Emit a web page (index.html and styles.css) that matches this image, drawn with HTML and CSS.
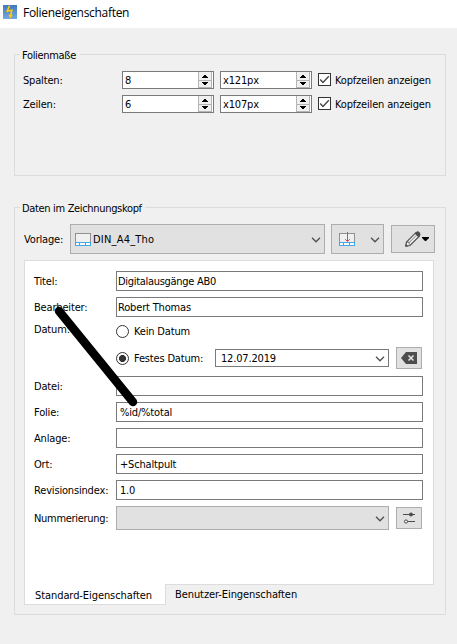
FILE: index.html
```html
<!DOCTYPE html>
<html lang="de">
<head>
<meta charset="utf-8">
<title>Folieneigenschaften</title>
<link rel="stylesheet" href="styles.css">
</head>
<body>
<svg class="defs" width="0" height="0">
  <symbol id="chevron" viewBox="0 0 10 6"><path d="M1 .8 5 4.8 9 .8" fill="none" stroke="#505050" stroke-width="1.3"/></symbol>
  <symbol id="arrows" viewBox="0 0 14 16" shape-rendering="crispEdges">
    <path d="M0 0h14v16H0z" fill="#f0f0f0"/>
    <path d="M.5 0v15.5H14M.5 8.5H14M13.5 0v16" fill="none" stroke="#b4b4b4"/>
    <path d="M6 3h2v1h1v1H5V4h1zM4 5h6v1H4zM4 10h6v1H4zM5 11h4v1H8v1H6v-1H5z" fill="#000"/>
  </symbol>
  <symbol id="check" viewBox="0 0 13 13"><path d="M2.2 6.5 5 9.5 10.8 3.3" fill="none" stroke="#404040" stroke-width="1.3"/></symbol>
</svg>
<header class="titlebar">
  <svg class="logo" width="14" height="14" viewBox="0 0 14 14">
    <defs><linearGradient id="blue" x1="0" y1="0" x2="0" y2="1"><stop stop-color="#3f78bd"/><stop offset="1" stop-color="#74a9e2"/></linearGradient></defs>
    <path d="M0 0h14v14H0z" fill="url(#blue)"/>
    <path d="M6.5.8 4.2 6.2l4.6-.9L7.6 11" fill="none" stroke="#fc0" stroke-width="1.6"/>
    <path d="M5.4 9.5 7.2 13.4 9.7 10z" fill="#fc0"/>
  </svg>
  <span class="title">Folieneigenschaften</span>
</header>
<main>
  <section class="group sheet">
    <h2 class="legend">Folienmaße</h2>
    <div class="dims">
      <label>Spalten:</label>
      <div class="spin"><span>8</span><svg width="14" height="16"><use href="#arrows"/></svg></div>
      <div class="spin"><span>x121px</span><svg width="14" height="16"><use href="#arrows"/></svg></div>
      <div class="checkrow"><i class="box"><svg width="11" height="11" viewBox="1 1 11 11"><use href="#check" width="13" height="13"/></svg></i><span>Kopfzeilen anzeigen</span></div>
      <label>Zeilen:</label>
      <div class="spin"><span>6</span><svg width="14" height="16"><use href="#arrows"/></svg></div>
      <div class="spin"><span>x107px</span><svg width="14" height="16"><use href="#arrows"/></svg></div>
      <div class="checkrow"><i class="box"><svg width="11" height="11" viewBox="1 1 11 11"><use href="#check" width="13" height="13"/></svg></i><span>Kopfzeilen anzeigen</span></div>
    </div>
  </section>
  <section class="group block">
    <h2 class="legend wide">Daten im Zeichnungskopf</h2>
    <div class="template">
      <label class="tpl-label">Vorlage:</label>
      <div class="combo tpl">
        <svg width="16" height="13" viewBox="0 0 16 13" shape-rendering="crispEdges"><path d="M.5 9V.5h15V9" fill="#f0f0f0" stroke="#909090"/><path d="M.5 9.5h15v3H.5zM4.5 10v2M10.5 10v2" fill="#fff" stroke="#41a8e8"/></svg>
        <span class="tpl-name">DIN_A4_Tho</span>
        <svg class="chev" width="10" height="6"><use href="#chevron"/></svg>
      </div>
      <div class="combo place">
        <svg width="16" height="14" viewBox="0 0 16 14"><g shape-rendering="crispEdges"><path d="M.5 10V1.5h15V10" fill="#f0f0f0" stroke="#909090"/><path d="M.5 10.5h15v3H.5zM4.5 11v2M10.5 11v2" fill="#fff" stroke="#41a8e8"/><path d="M8.5 0v9" stroke="#da4453"/></g><path d="M6.2 7.2 8.5 9.5l2.3-2.3" fill="none" stroke="#da4453"/></svg>
        <svg class="chev" width="10" height="6"><use href="#chevron"/></svg>
      </div>
      <div class="combo edit">
        <svg width="16" height="16" viewBox="0 0 16 16"><path d="M.8 15.2 1.5 11 10.8 1.7 14.3 5.2 5 14.5z" fill="#eee" stroke="#4d4d4d" stroke-width="1.1"/><path d="m9.8 2.7 2-2.2q1.5-.5 2.7.7t.9 3L13.3 6.2zM.5 12.5v3h3z" fill="#4d4d4d"/><path d="M1.8 11.2h2.4v2.4M4.2 11.5l7-7" fill="none" stroke="#4d4d4d" stroke-width=".7"/></svg>
        <svg class="drop" width="7" height="4" viewBox="0 0 7 4"><path d="M0 0h7v1L4 4H3L0 1z"/></svg>
      </div>
    </div>
    <div class="panel">
      <label>Titel:</label><div class="field tight">Digitalausgänge AB0</div>
      <label>Bearbeiter:</label><div class="field">Robert Thomas</div>
      <label class="date-label">Datum:</label><div class="radio"><i></i><span>Kein Datum</span></div>
      <span></span>
      <div class="daterow">
        <div class="radio on"><i></i><span>Festes Datum:</span></div>
        <div class="date"><span>12.07.2019</span><svg class="chev" width="10" height="6"><use href="#chevron"/></svg></div>
        <div class="small"><svg width="16" height="12" viewBox="0 0 16 12"><path d="M0 6 5 0h11v12H5z" fill="#4d4d4d"/><path d="m7.5 3.5 5 5m0-5-5 5" stroke="#e1e1e1" stroke-width="1.6"/></svg></div>
      </div>
      <label>Datei:</label><div class="field"></div>
      <label>Folie:</label><div class="field pad">%id/%total</div>
      <label>Anlage:</label><div class="field"></div>
      <label>Ort:</label><div class="field pad">+Schaltpult</div>
      <label>Revisionsindex:</label><div class="field pad">1.0</div>
      <label class="tight">Nummerierung:</label>
      <div class="daterow">
        <div class="combo num"><svg class="chev" width="10" height="6"><use href="#chevron"/></svg></div>
        <div class="small"><svg width="12" height="12" viewBox="0 0 12 12"><path d="M0 2.5h12M4 9.5h8" stroke="#4d4d4d"/><circle cx="8" cy="2.5" r="2" fill="#4d4d4d"/><circle cx="3" cy="9.5" r="1.6" fill="#eee" stroke="#4d4d4d"/></svg></div>
      </div>
    </div>
    <nav class="tabs"><span class="tab active">Standard-Eigenschaften</span><span class="tab">Benutzer-Eingenschaften</span></nav>
  </section>
</main>
<svg class="stroke" width="457" height="644"><path d="M59 311 133 402"/></svg>
</body>
</html>
```

FILE: styles.css
```css
* { box-sizing: border-box; }
body { margin: 0; width: 457px; height: 644px; overflow: hidden; background: #f0f0f0; color: #000; font: 11px/14px "DejaVu Sans Condensed", "DejaVu Sans", sans-serif; font-stretch: condensed; letter-spacing: -.17px; white-space: nowrap; }
svg { display: block; flex: none; }
label, span { padding-top: 2px; }
.tight { letter-spacing: -.3px; }
.defs { position: absolute; }
.titlebar { height: 28px; background: #fff; display: flex; align-items: flex-start; padding: 5px 3px; gap: 6px; }
.title { padding-top: 0; font: 12px/16px "Open Sans", sans-serif; letter-spacing: -.3px; }
main { padding: 26px 11px 0 14px; display: flex; flex-direction: column; gap: 31px; }
.group { border: 1px solid #dcdcdc; }
.sheet { height: 122px; }
.block { height: 408px; }
.legend { margin: -8px 0 0 5px; padding: 0 2px; width: 60px; height: 16px; font: inherit; line-height: 18px; letter-spacing: -.33px; background: #f0f0f0; }
.legend.wide { width: 125px; }
.dims { display: grid; grid-template-columns: 93px 92px 92px 1fr; grid-auto-rows: 18px; column-gap: 6px; row-gap: 6px; margin: 8px 0 0 8px; align-items: center; }
.spin { height: 18px; border: 1px solid #7a7a7a; background: #fff; display: flex; align-items: center; justify-content: space-between; padding: 0 1px 0 2px; }
.checkrow { display: flex; align-items: center; gap: 4px; height: 16px; margin-bottom: 2px; }
.checkrow span { padding-top: 3px; }
.box { width: 13px; height: 13px; border: 1px solid #333; background: #fff; }
.template { display: flex; align-items: center; height: 30px; margin: 8px 0 0 9px; }
.tpl-label { width: 46px; }
.tpl-name { letter-spacing: .2px; }
.combo { background: #e1e1e1; border: 1px solid #adadad; display: flex; align-items: center; }
.chev { margin: 2px 0 0 auto; }
.tpl { width: 255px; height: 30px; padding: 0 3px 0 4px; gap: 2px; }
.place { width: 53px; height: 30px; padding: 0 3px 0 7px; margin: 0 7px 0 6px; }
.edit { width: 44px; height: 28px; padding-left: 13px; gap: 1px; }
.panel { margin: 6px 0 0 9px; width: 410px; height: 325px; padding: 10px 10px 0 9px; background: #fff; border: 1px solid #dcdcdc; display: grid; grid-template-columns: 82px 307px; grid-template-rows: 20px 20px 17px 24px repeat(5, 20px) 24px; row-gap: 6px; align-content: start; align-items: center; }
.date-label { align-self: start; padding: 0; }
.field { height: 20px; border: 1px solid #7a7a7a; padding: 3px 1px 1px; line-height: 14px; }
.pad { padding-left: 3px; }
.radio { display: flex; align-items: center; gap: 5px; }
.radio span { padding-top: 1px; }
.radio i { width: 13px; height: 13px; border: 1px solid #333; border-radius: 50%; background: #fff; }
.radio.on i { background: radial-gradient(circle, #333 3.2px, #fff 3.8px); }
.daterow { display: flex; align-items: center; }
.date { width: 174px; height: 18px; margin-left: auto; border: 1px solid #7a7a7a; display: flex; align-items: center; padding: 0 3px 0 5px; }
.small { width: 26px; height: 22px; margin: 0 1px 0 7px; border: 1px solid #adadad; background: #e1e1e1; display: flex; align-items: center; justify-content: center; }
.num { width: 273px; height: 24px; padding-right: 3px; }
.tabs { display: flex; margin-left: 9px; letter-spacing: -.08px; }
.tab { padding: 3px 9px 0; height: 18px; }
.active { width: 142px; height: 21px; margin-top: -1px; padding: 5px 0 0 10px; background: #fff; border: 1px solid #dcdcdc; border-top: 0; }
.stroke { position: absolute; left: 0; top: 0; pointer-events: none; }
.stroke path { stroke: #000; stroke-width: 8.5; stroke-linecap: round; }
```
